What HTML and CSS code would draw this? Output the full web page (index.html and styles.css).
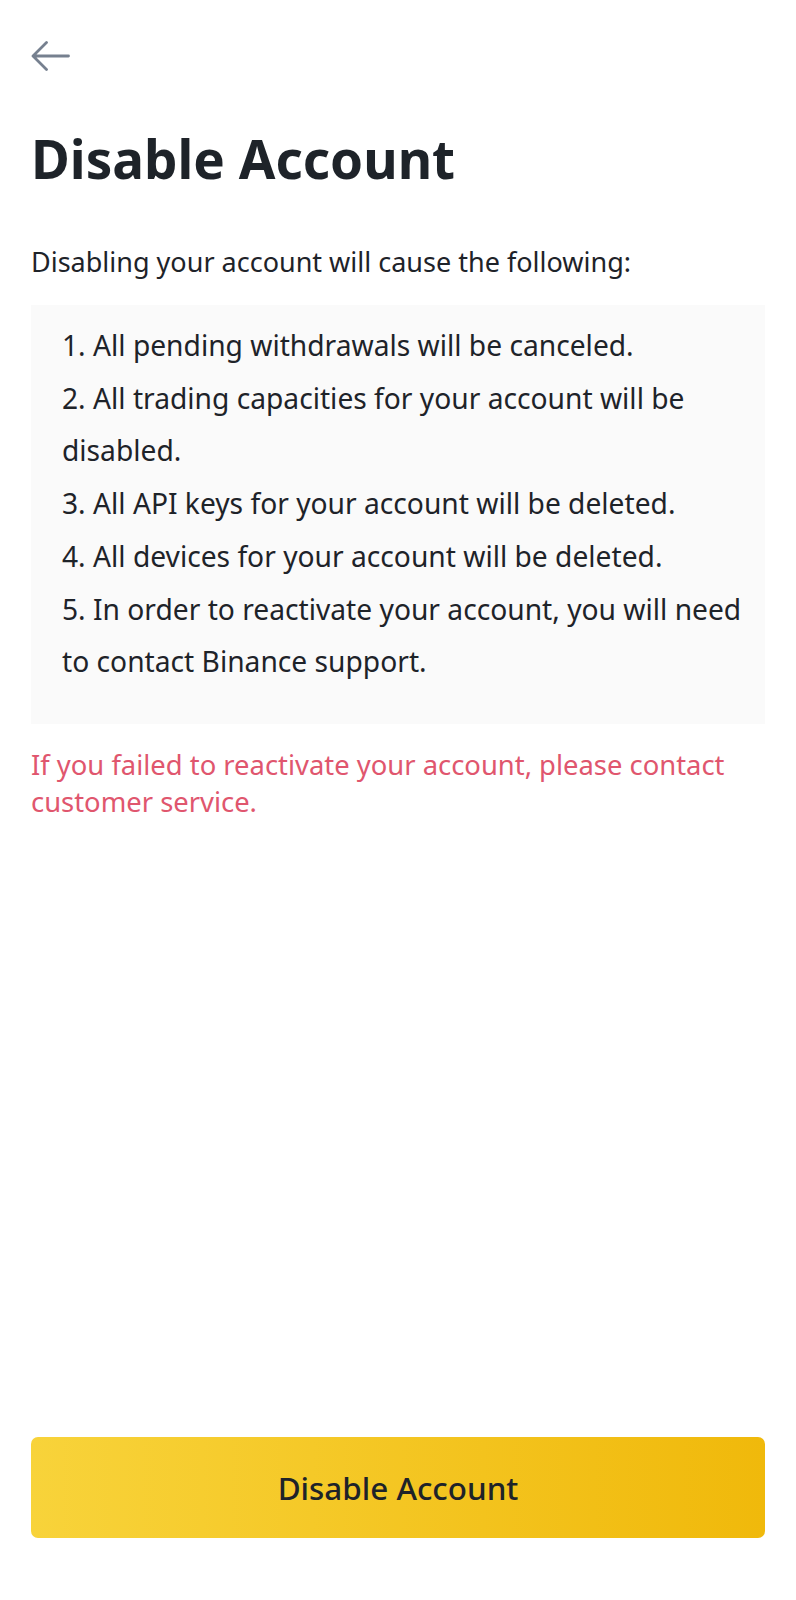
FILE: index.html
```html
<html>
  <head>
    <link rel="stylesheet" href="styles.css">
    <title>Disable Account</title>
  </head>
  <body>
    <div class="page">
      <div class="topbar">
        <svg class="back" width="40" height="31" viewBox="0 0 40 31">
          <path d="M37.5 15H2.5M15.5 1.5L2 15L15.5 28.5" fill="none" stroke="#76808f" stroke-width="2.8" stroke-linecap="round" stroke-linejoin="round"/>
        </svg>
      </div>
      <h1 class="title">Disable Account</h1>
      <p class="intro">Disabling your account will cause the following:</p>
      <div class="notice">
        <p>1. All pending withdrawals will be canceled.</p>
        <p>2. All trading capacities for your account will be disabled.</p>
        <p>3. All API keys for your account will be deleted.</p>
        <p>4. All devices for your account will be deleted.</p>
        <p>5. In order to reactivate your account, you will need to contact Binance support.</p>
      </div>
      <p class="warn">If you failed to reactivate your account, please contact customer service.</p>
      <div class="spacer"></div>
      <button class="primary">Disable Account</button>
    </div>
  </body>
</html>
```

FILE: styles.css
```css
body {
  margin: 0;
  background: #fff;
  font-family: "Noto Sans", sans-serif;
  color: #1e2329;
}

.page {
  height: 1600px;
  box-sizing: border-box;
  padding: 0 31px 62px;
  display: flex;
  flex-direction: column;
}

.topbar {
  padding-top: 41px;
  display: flex;
}

.back {
  display: block;
}

.title {
  margin: 55px 0 0;
  font-size: 53px;
  font-weight: 700;
  line-height: 64px;
}

.intro {
  margin: 53px 0 0;
  font-size: 27px;
  line-height: 36px;
}

.notice {
  margin-top: 24.5px;
  background: #fafafa;
  padding: 14.5px 14px 36.5px 31px;
}

.notice p {
  margin: 0;
  font-size: 28.2px;
  line-height: 52.7px;
}

.warn {
  margin: 23px 0 0;
  font-size: 27.4px;
  line-height: 36.5px;
  color: #e0566e;
}

.spacer {
  flex: 1;
}

.primary {
  height: 101px;
  flex-shrink: 0;
  border: none;
  border-radius: 7px;
  background: linear-gradient(90deg, #f8d33a, #f0b90b);
  font-family: inherit;
  font-size: 31.4px;
  font-weight: 500;
  color: #1e2329;
}
```
